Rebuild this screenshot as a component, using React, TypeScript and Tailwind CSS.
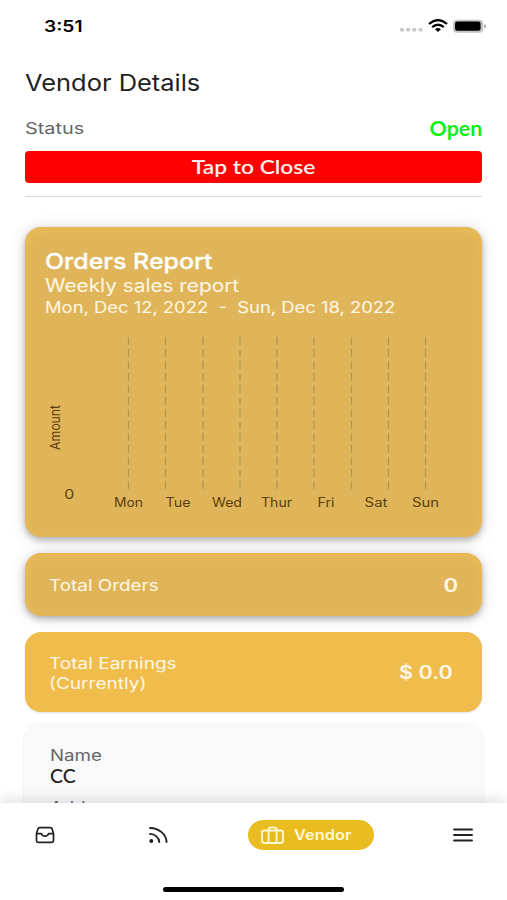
import type { ReactNode } from "react";

const gridLines = [128.5, 165.5, 203, 240, 277, 314, 351.5, 388.5, 425.5];

const days = [
  { label: "Mon", x: 114, width: 29 },
  { label: "Tue", x: 165.5, width: 25 },
  { label: "Wed", x: 212, width: 30 },
  { label: "Thur", x: 261, width: 31 },
  { label: "Fri", x: 317.5, width: 17 },
  { label: "Sat", x: 364.5, width: 23 },
  { label: "Sun", x: 412, width: 27 },
];

/** Single line of text, widened horizontally from its left edge. */
function Line({ className, children }: { className: string; children: ReactNode }) {
  return <div className={`w-max origin-left whitespace-pre ${className}`}>{children}</div>;
}

function StatusBar() {
  return (
    <div className="flex h-[52px] items-center justify-between pl-[44px] pr-[21px]">
      <Line className="scale-x-[1.2] text-[16px] leading-[20px] font-semibold text-black">3:51</Line>
      <svg width="88" height="16" viewBox="0 0 88 16">
        <g fill="#c9c9c9">
          <rect x="2" y="10" width="4" height="3.6" rx="1" />
          <rect x="8.200" y="10" width="4" height="3.6" rx="1" />
          <rect x="14.300" y="10" width="4" height="3.6" rx="1" />
          <rect x="20.500" y="10" width="4" height="3.6" rx="1" />
        </g>
        <g fill="none" stroke="#000" strokeWidth="2.3">
          <path d="M31 6Q40-1.800 49 6" />
          <path d="M34.200 9.200Q40 4.200 45.800 9.200" />
        </g>
        <path d="M37 11.200Q40 9 43 11.200L40 14Z" />
        <rect x="55" y="1.700" width="30.300" height="13" rx="4" fill="#c4c4c4" />
        <rect x="57" y="3.500" width="25.600" height="9.300" rx="2.300" />
        <path d="M86.200 6.200v4.200Q88.200 9.700 88.200 8.300T86.200 6.200Z" fill="#a5a5a5" />
      </svg>
    </div>
  );
}

function OrdersChart() {
  return (
    <svg className="block" width="458" height="194" viewBox="25 328 458 194">
      <g stroke="#8d8350" strokeOpacity="0.6" strokeWidth="1.2" strokeDasharray="8 4">
        {gridLines.map((x) => (
          <line key={x} x1={x} x2={x} y1="337" y2="493" />
        ))}
      </g>
      <g fill="#5b3e0e" fontSize="12.5">
        <text transform="translate(59.500 450) rotate(-90)" fontSize="13.5" textLength="45" lengthAdjust="spacingAndGlyphs">
          Amount
        </text>
        <text x="64.200" y="499" fontSize="13" textLength="10" lengthAdjust="spacingAndGlyphs">0</text>
        {days.map((d) => (
          <text key={d.label} x={d.x} y="507" textLength={d.width} lengthAdjust="spacingAndGlyphs">
            {d.label}
          </text>
        ))}
      </g>
    </svg>
  );
}

const shadedCard =
  "rounded-[16px] bg-[#e0b559] shadow-[0_3px_6px_rgba(0,0,0,0.26),0_1px_18px_rgba(0,0,0,0.13),inset_0_3px_12px_rgba(240,190,84,0.75)]";

function OrdersReport() {
  return (
    <section className={`mt-[30px] flex h-[310px] flex-col text-[#fff8e6] ${shadedCard}`}>
      <div className="h-[101px] pl-[19.500px] pt-[21px]">
        <Line className="scale-x-[1.16] text-[21.500px] leading-[26px] font-medium text-white [-webkit-text-stroke:0.3px_white]">Orders Report</Line>
        <Line className="scale-x-[1.155] text-[18px] leading-[24px]">Weekly sales report</Line>
        <Line className="scale-x-[1.187] text-[15.500px] leading-[20px]">Mon, Dec 12, 2022  -  Sun, Dec 18, 2022</Line>
      </div>
      <OrdersChart />
    </section>
  );
}

function BottomNav() {
  return (
    <nav className="relative z-10 h-[97px] shrink-0 bg-white shadow-[0_-2px_14px_rgba(0,0,0,0.14)]">
      <div className="flex items-center pl-[35px] pt-[17px]">
        <svg width="20" height="18" viewBox="0 0 20 18" fill="none" stroke="#222" strokeWidth="1.7" strokeLinejoin="round" strokeLinecap="round">
          <path d="M4.700 1.600h10.600q1.300 0 1.700 1.200l1.500 4.700v7.300q0 1.600-1.600 1.600H3.100q-1.600 0-1.600-1.600V7.500L3 2.800q.4-1.200 1.700-1.200ZM1.500 7.600h5q.6 2.500 3.500 2.500t3.500-2.500h5" />
        </svg>
        <svg className="ml-[93px]" width="20" height="18" viewBox="0 0 20 18" fill="none" stroke="#222" strokeWidth="1.900" strokeLinecap="round">
          <path d="M2 2C11 2.100 18.300 8.200 18.600 16M2 7.900c5 .1 9.100 3.800 9.300 8.100" />
          <circle cx="3.300" cy="14.900" r="2" fill="#222" stroke="none" />
        </svg>
        <div className="ml-[80px] flex h-[30px] w-[126px] items-center rounded-full bg-[#e9bd1f] pl-[12px] text-[#fff9d8]">
          <svg className="mr-[9px]" width="25" height="20" viewBox="0 0 25 20" fill="none" stroke="currentColor" strokeWidth="1.800" strokeLinejoin="round">
            <rect x="2" y="5.500" width="21" height="12.500" rx="2.200" />
            <path d="M8.600 18V4.500Q8.600 2.300 11 2.300h3.200q2.400 0 2.400 2.200V18" />
          </svg>
          <Line className="scale-x-[1.13] text-[14.500px] leading-[20px] font-semibold">Vendor</Line>
        </div>
        <svg className="ml-[78px]" width="22" height="18" viewBox="0 0 22 18" stroke="#222" strokeWidth="1.900" strokeLinecap="round">
          <path d="M2 3.500h18M2 9h18M2 14.500h18" />
        </svg>
      </div>
      <div className="mx-auto mt-[37px] h-[5px] w-[181px] rounded-full bg-black" />
    </nav>
  );
}

export default function App() {
  return (
    <div className="flex h-[900px] w-[507px] flex-col overflow-hidden bg-white font-['Inter','Liberation_Sans',sans-serif]">
      <StatusBar />
      <main className="min-h-0 flex-1 overflow-hidden px-[25px] pt-[16px] text-[#fff8e6]">
        <Line className="scale-x-[1.13] text-[22.500px] leading-[30px] text-[#222]">Vendor Details</Line>
        <div className="mt-[18px] flex h-[24px] items-center justify-between">
          <Line className="scale-x-[1.24] text-[16px] leading-[24px] text-[#666]">Status</Line>
          <div className="origin-right scale-x-[1.07] font-['Lato'] text-[20px] leading-[24px] font-bold text-[#12ee16]">Open</div>
        </div>
        <button className="mt-[11px] flex h-[32px] w-full items-center justify-center rounded-[4px] bg-[#ff0000] font-['Lato'] text-[19px] font-semibold text-[#fff0ee]">
          <span className="scale-x-[1.2]">Tap to Close</span>
        </button>
        <div className="mt-[13px] h-px bg-[#dcdcdc]" />
        <OrdersReport />
        <section className={`mt-[16px] flex h-[63px] items-center justify-between pl-[24px] pr-[24px] ${shadedCard}`}>
          <Line className="scale-x-[1.18] text-[16px] leading-[20px]">Total Orders</Line>
          <div className="origin-right scale-x-[1.2] text-[18.500px] leading-[24px] font-semibold">0</div>
        </section>
        <section className="mt-[16px] flex h-[80px] items-center justify-between rounded-[16px] bg-[#f0bc4b] pl-[24px] pr-[29px] shadow-[0_1px_2px_rgba(0,0,0,0.12)]">
          <Line className="translate-y-[0.500px] scale-x-[1.19] text-[16px] leading-[20px]">{"Total Earnings\n(Currently)"}</Line>
          <div className="origin-right translate-y-px scale-x-[1.2] text-[18px] leading-[24px] font-semibold">$ 0.0</div>
        </section>
        <section className="-mx-px mt-[10.500px] h-[150px] rounded-[16px] bg-[#f9f9f9] pl-[25.500px] pt-[21.500px] shadow-[0_1px_3px_rgba(0,0,0,0.1)]">
          <Line className="scale-x-[1.17] text-[16px] leading-[22px] text-[#666]">Name</Line>
          <Line className="scale-x-[1.02] font-['Lato'] text-[19px] leading-[20px] font-medium text-[#222]">CC</Line>
          <Line className="mt-[10px] scale-x-[1.16] text-[16px] leading-[22px] text-[#666]">Address</Line>
        </section>
      </main>
      <BottomNav />
    </div>
  );
}
